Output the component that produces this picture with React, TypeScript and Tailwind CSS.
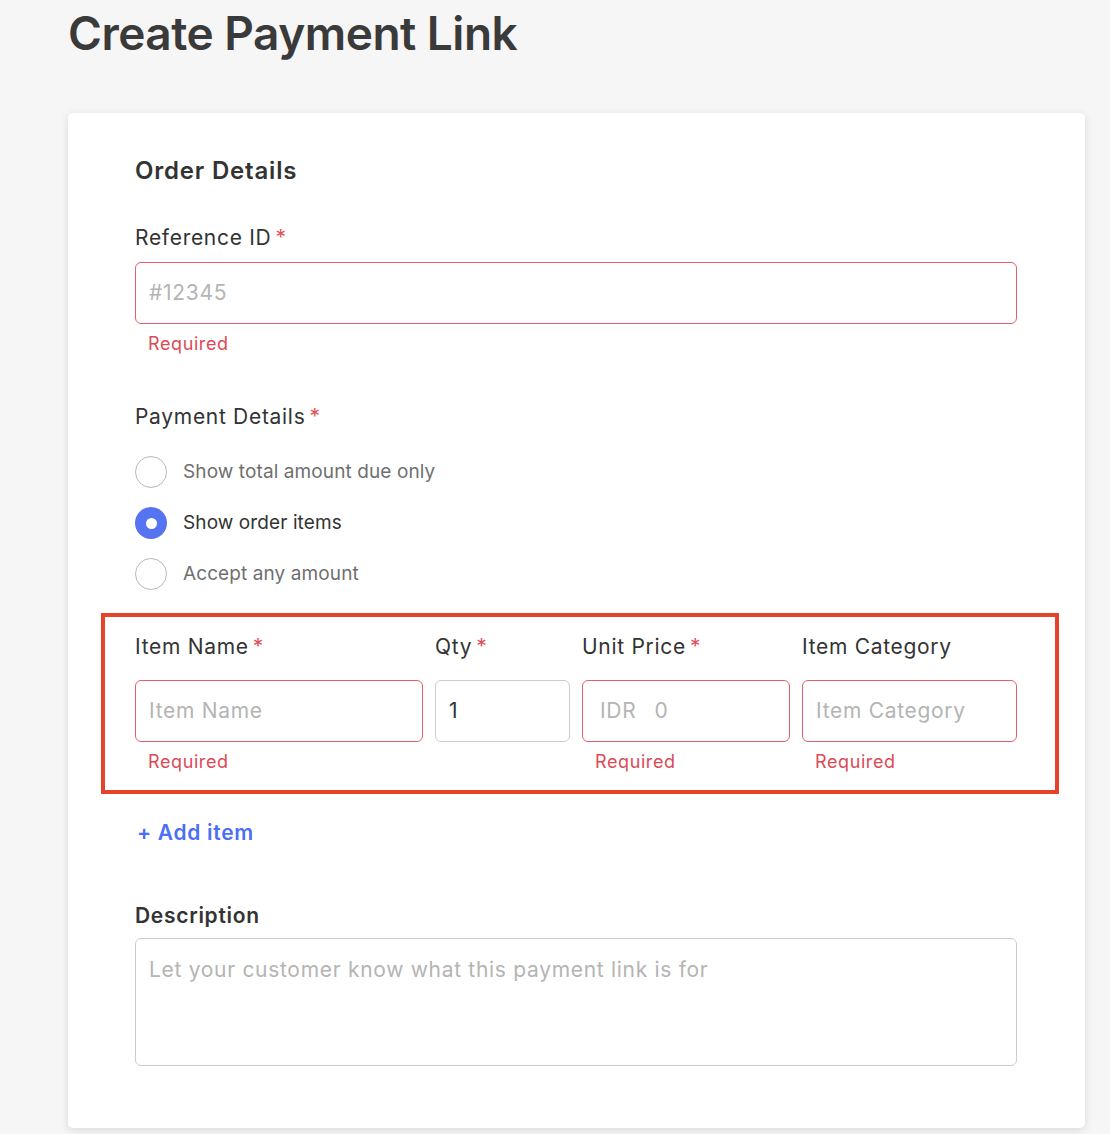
import React from "react";

const font = { fontFamily: "Inter, 'Noto Sans', sans-serif" };

function Req() {
  return <span className="ml-1 text-[#e0505a]">*</span>;
}

function Label({ children, required }: { children: React.ReactNode; required?: boolean }) {
  return (
    <div className="text-[21px] leading-[28px] tracking-[0.7px] text-[#333]">
      {children}
      {required && <Req />}
    </div>
  );
}

function ErrorText() {
  return (
    <div className="mt-[8px] pl-[13px] text-[18px] leading-[24px] tracking-[0.6px] text-[#dc4a55]">Required</div>
  );
}

function Radio({ label, checked }: { label: string; checked?: boolean }) {
  return (
    <label className="flex items-center gap-4">
      {checked ? (
        <span className="flex h-8 w-8 items-center justify-center rounded-full bg-[#5673f2]">
          <span className="h-[11px] w-[11px] rounded-full bg-white" />
        </span>
      ) : (
        <span className="h-8 w-8 rounded-full border border-[#b9b9b9] bg-white" />
      )}
      <span className={`text-[19px] leading-[28px] tracking-[0.1px] ${checked ? "text-[#333]" : "text-[#6f6f6f]"}`}>
        {label}
      </span>
    </label>
  );
}

function Field({
  children,
  error = true,
  className = "",
}: {
  children: React.ReactNode;
  error?: boolean;
  className?: string;
}) {
  return (
    <div
      className={`flex h-[62px] items-center rounded-[6px] border bg-white px-[13px] text-[21px] tracking-[0.7px] ${
        error ? "border-[#e0606a]" : "border-[#cccccc]"
      } ${className}`}
    >
      {children}
    </div>
  );
}

const ph = "text-[#b4b4b4]";

export default function App() {
  return (
    <div className="min-h-screen bg-[#f6f6f6] pb-[6px]" style={font}>
      <h1 className="pl-[68px] pt-[9px] text-[46px] font-semibold leading-[48px] tracking-[-0.5px] text-[#3a3a3a]">
        Create Payment Link
      </h1>

      <div className="ml-[68px] mt-[56px] w-[1017px] rounded-[5px] bg-white pb-[62px] pl-[67px] pr-[68px] pt-[42px] shadow-[0_2px_8px_rgba(0,0,0,0.12)]">
        <h2 className="text-[24px] font-semibold leading-[32px] tracking-[0.8px] text-[#333]">Order Details</h2>

        <div className="mt-[37px]">
          <Label required>Reference ID</Label>
          <Field className="mt-[10px]">
            <span className={ph}>#12345</span>
          </Field>
          <ErrorText />
        </div>

        <div className="mt-[47px]">
          <Label required>Payment Details</Label>
          <div className="mt-[25px] flex flex-col gap-[19px]">
            <Radio label="Show total amount due only" />
            <Radio label="Show order items" checked />
            <Radio label="Accept any amount" />
          </div>
        </div>

        <div className="-ml-[34px] -mr-[42px] mt-[23px] border-4 border-[#e6432b] pb-[16px] pl-[30px] pr-[38px] pt-[16px]">
          <div className="grid grid-cols-[288px_135px_208px_1fr] gap-x-[12px]">
            <div>
              <Label required>Item Name</Label>
              <Field className="mt-[19px]">
                <span className={ph}>Item Name</span>
              </Field>
              <ErrorText />
            </div>
            <div>
              <Label required>Qty</Label>
              <Field className="mt-[19px]" error={false}>
                <span className="text-[#333]">1</span>
              </Field>
            </div>
            <div>
              <Label required>Unit Price</Label>
              <Field className="mt-[19px] gap-[18px] pl-[17px]">
                <span className={ph}>IDR</span>
                <span className={ph}>0</span>
              </Field>
              <ErrorText />
            </div>
            <div>
              <Label>Item Category</Label>
              <Field className="mt-[19px]">
                <span className={ph}>Item Category</span>
              </Field>
              <ErrorText />
            </div>
          </div>
        </div>

        <button
          type="button"
          className="ml-[2px] mt-[25px] block text-[21px] font-semibold leading-[28px] tracking-[0.7px] text-[#4b6ff5]"
        >
          + Add item
        </button>

        <div className="mt-[55px]">
          <div className="text-[21px] font-semibold leading-[28px] tracking-[0.7px] text-[#333]">Description</div>
          <div className="mt-[8px] h-[128px] rounded-[6px] border border-[#cccccc] bg-white px-[13px] pt-[17px] text-[21px] leading-[28px] tracking-[0.7px] text-[#b4b4b4]">
            Let your customer know what this payment link is for
          </div>
        </div>
      </div>
    </div>
  );
}
